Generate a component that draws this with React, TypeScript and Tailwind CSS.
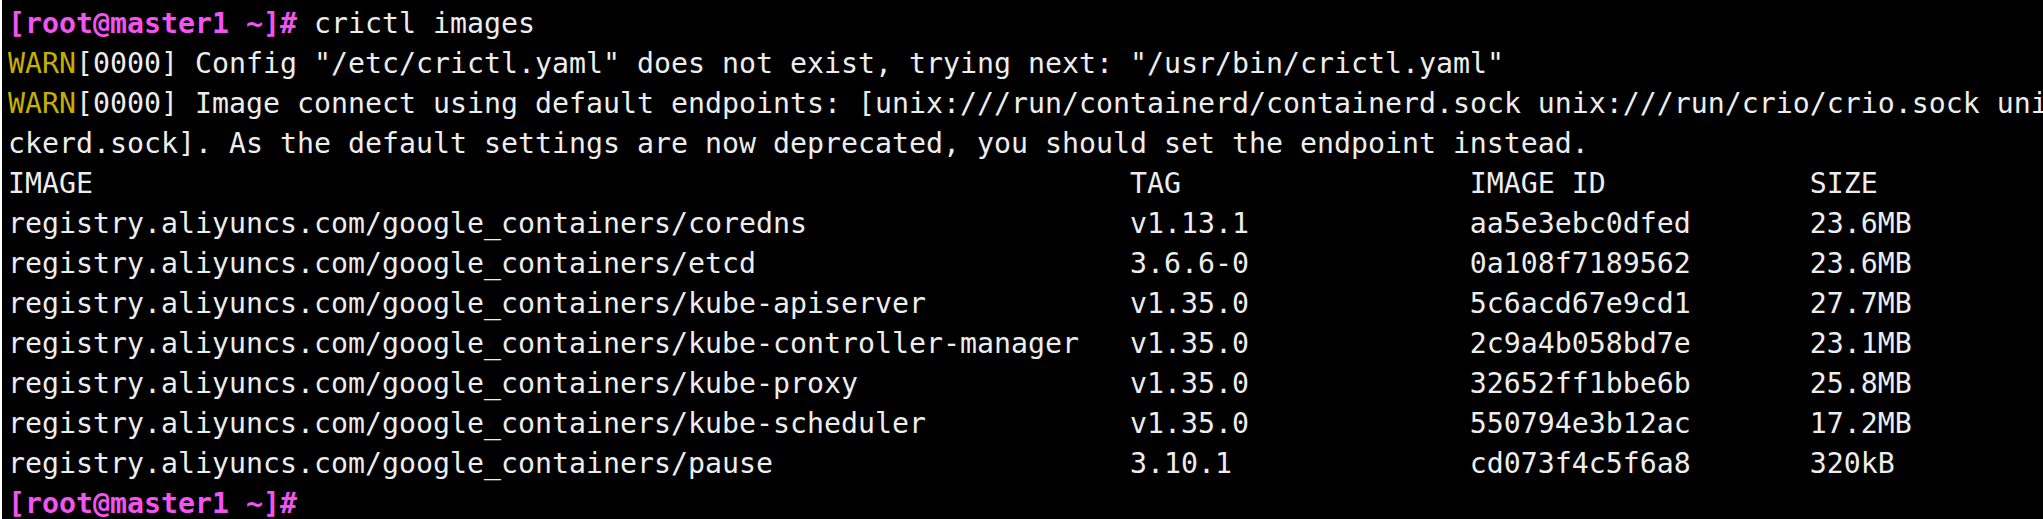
import React from "react";

const rows: [string, string, string, string][] = [
  ["IMAGE", "TAG", "IMAGE ID", "SIZE"],
  ["registry.aliyuncs.com/google_containers/coredns", "v1.13.1", "aa5e3ebc0dfed", "23.6MB"],
  ["registry.aliyuncs.com/google_containers/etcd", "3.6.6-0", "0a108f7189562", "23.6MB"],
  ["registry.aliyuncs.com/google_containers/kube-apiserver", "v1.35.0", "5c6acd67e9cd1", "27.7MB"],
  ["registry.aliyuncs.com/google_containers/kube-controller-manager", "v1.35.0", "2c9a4b058bd7e", "23.1MB"],
  ["registry.aliyuncs.com/google_containers/kube-proxy", "v1.35.0", "32652ff1bbe6b", "25.8MB"],
  ["registry.aliyuncs.com/google_containers/kube-scheduler", "v1.35.0", "550794e3b12ac", "17.2MB"],
  ["registry.aliyuncs.com/google_containers/pause", "3.10.1", "cd073f4c5f6a8", "320kB"],
];

function fmt(r: [string, string, string, string]) {
  return r[0].padEnd(66, " ") + r[1].padEnd(20, " ") + r[2].padEnd(20, " ") + r[3];
}

function Line({ children }: { children?: React.ReactNode }) {
  return <div className="h-[40px] leading-[40px] whitespace-pre">{children}</div>;
}

function Prompt() {
  return <span className="font-bold text-[#f553f0]">[root@master1 ~]#</span>;
}

function Warn() {
  return <span className="text-[#c4b000]">WARN</span>;
}

export default function App() {
  return (
    <div
      className="w-[2043px] h-[519px] overflow-hidden bg-black text-[#ededed] border-l-2 border-white"
      style={{ fontFamily: '"DejaVu Sans Mono", monospace', fontSize: "28.24px" }}
    >
      <div className="pl-[6px]">
        <div className="h-[3.5px] overflow-hidden">
          <div className="-mt-[36.5px]">
            <Line>{"      ,        [              ,       p                [                  ]                  y       ]          ["}</Line>
          </div>
        </div>
        <Line>
          <Prompt /> crictl images
        </Line>
        <Line>
          <Warn />[0000] Config "/etc/crictl.yaml" does not exist, trying next: "/usr/bin/crictl.yaml"
        </Line>
        <Line>
          <Warn />[0000] Image connect using default endpoints: [unix:///run/containerd/containerd.sock unix:///run/crio/crio.sock unix:///var/run/cri-do
        </Line>
        <Line>ckerd.sock]. As the default settings are now deprecated, you should set the endpoint instead.</Line>
        {rows.map((r, i) => (
          <Line key={i}>{fmt(r)}</Line>
        ))}
        <Line>
          <Prompt />
        </Line>
      </div>
    </div>
  );
}
